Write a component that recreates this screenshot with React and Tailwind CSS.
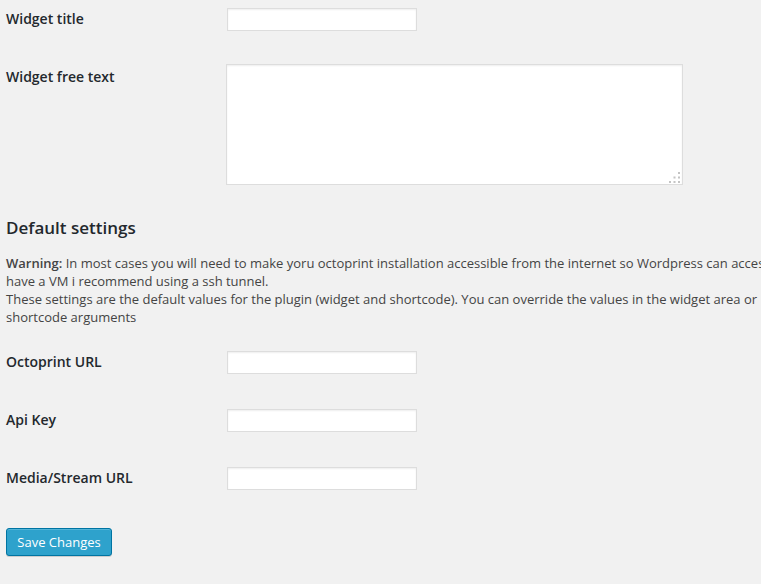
import React from 'react';

const labelCls = "shrink-0 text-[14px] font-semibold leading-[18px] text-[#23282d]";
const inputCls = "block w-[190px] h-[23px] border border-[#ddd] bg-white shadow-[inset_0_1px_2px_rgba(0,0,0,0.07)] outline-none";

const Field = ({ label, className = '' }) => (
  <div className={`flex ${className}`}>
    <label className={`${labelCls} w-[221px] pt-[2px]`}>{label}</label>
    <input type="text" className={inputCls} />
  </div>
);

export default function App() {
  return (
    <div className="min-h-screen bg-[#f1f1f1] pl-[6px] pt-[8px] overflow-hidden font-['Open_Sans',sans-serif] text-[#444]">
      <Field label="Widget title" />

      <div className="flex mt-[33px]">
        <label className={`${labelCls} w-[220px] pt-[4px]`}>Widget free text</label>
        <div className="relative">
          <textarea className="block w-[457px] h-[121px] border border-[#ddd] bg-white shadow-[inset_0_1px_2px_rgba(0,0,0,0.07)] resize-none outline-none" />
          {/* resize grip */}
          <svg className="absolute right-[2px] bottom-[2px]" width="12" height="12" viewBox="0 0 12 12">
            <rect x="9" y="1" width="2" height="2" fill="#c4c4c4" />
            <rect x="4.5" y="5.5" width="2" height="2" fill="#c4c4c4" />
            <rect x="9" y="5.5" width="2" height="2" fill="#c4c4c4" />
            <rect x="0" y="10" width="2" height="2" fill="#c4c4c4" />
            <rect x="4.5" y="10" width="2" height="2" fill="#c4c4c4" />
            <rect x="9" y="10" width="2" height="2" fill="#c4c4c4" />
          </svg>
        </div>
      </div>

      <h3 className="mt-[32px] text-[17px] leading-[22px] font-semibold text-[#23282d]">Default settings</h3>

      <p className="mt-[15px] text-[13px] leading-[18px] whitespace-nowrap">
        <strong className="font-semibold">Warning:</strong> In most cases you will need to make yoru octoprint installation accessible from the internet so Wordpress can access it, if you
        <br />
        have a VM i recommend using a ssh tunnel.
        <br />
        These settings are the default values for the plugin (widget and shortcode). You can override the values in the widget area or
        <br />
        shortcode arguments
      </p>

      <Field label="Octoprint URL" className="mt-[25px]" />
      <Field label="Api Key" className="mt-[35px]" />
      <Field label="Media/Stream URL" className="mt-[35px]" />

      <button className="mt-[38px] block h-[28px] w-[106px] rounded-[3px] border border-[#0074a2] bg-[#2ea2cc] text-[13px] leading-[26px] text-white shadow-[inset_0_1px_0_rgba(120,200,230,0.5),0_1px_0_rgba(0,0,0,0.15)]">
        Save Changes
      </button>
    </div>
  );
}
